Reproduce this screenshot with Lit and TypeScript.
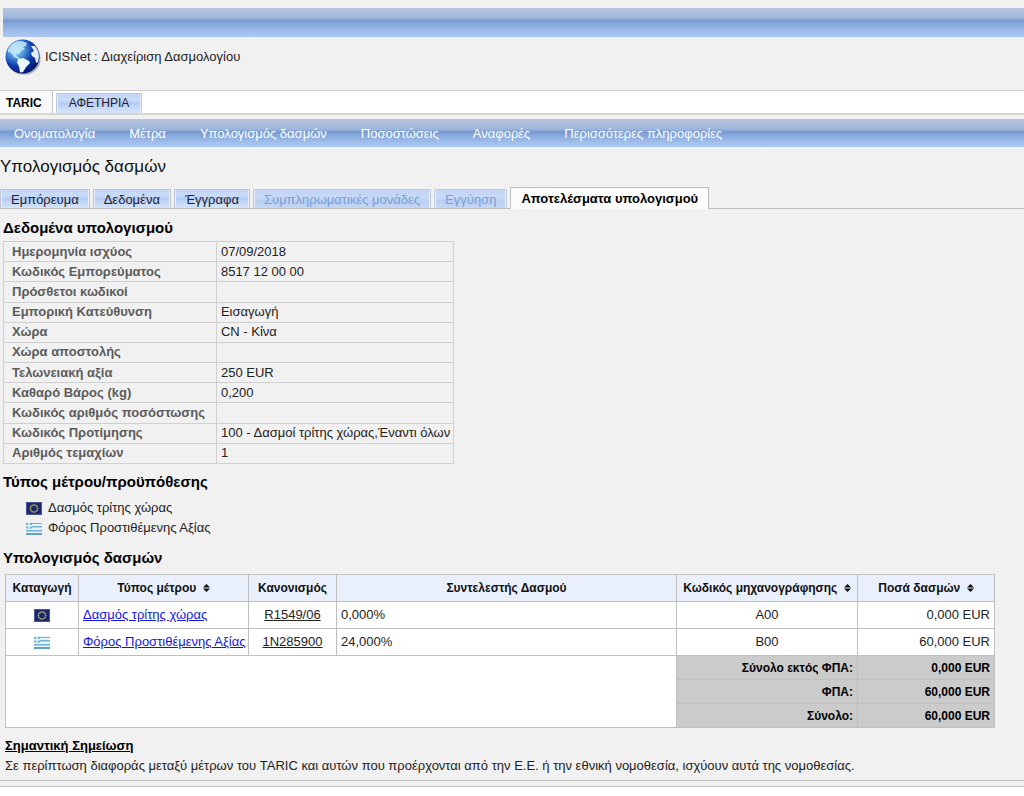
import { LitElement, html, css, svg, nothing } from "lit";
import { customElement, property } from "lit/decorators.js";
import { classMap } from "lit/directives/class-map.js";

const euStars = Array.from({ length: 12 }, (_, i) => {
  const a = (i * Math.PI) / 6;
  return svg`<circle cx=${8 + 3.6 * Math.sin(a)} cy=${6.5 - 3.6 * Math.cos(a)} r="0.9" fill="#a8a552"/>`;
});

@customElement("country-flag")
export class CountryFlag extends LitElement {
  @property() code = "eu";

  static styles = css`
    :host { display: inline-block; width: 16px; height: 13px; }
    .flag { display: block; width: 16px; height: 13px; }
  `;

  render() {
    if (this.code === "eu") {
      return html`<svg class="flag" viewBox="0 0 16 13" role="img" aria-label="EU">
        <rect width="16" height="13" fill="#4a5796"/>
        <rect x="1" y="1" width="14" height="11" fill="#1d2672"/>
        ${euStars}
      </svg>`;
    }
    return html`<svg class="flag" viewBox="0 0 16 13" role="img" aria-label="GR">
      <rect width="16" height="13" fill="#e6f1f6"/>
      <rect x="0" y="1" width="16" height="1" fill="#75b3d2"/>
      <rect x="6" y="4" width="10" height="1.5" fill="#75b3d2"/>
      <rect x="0" y="1" width="6" height="5.5" fill="#75b3d2"/>
      <rect x="2.4" y="1" width="1.2" height="5.5" fill="#fff"/>
      <rect x="0" y="3.2" width="6" height="1.2" fill="#fff"/>
      <rect x="0" y="8" width="16" height="1.5" fill="#75b3d2"/>
      <rect x="0" y="11" width="16" height="2" fill="#65a3c4"/>
    </svg>`;
  }
}

const menu = ["Ονοματολογία", "Μέτρα", "Υπολογισμός δασμών", "Ποσοστώσεις", "Αναφορές", "Περισσότερες πληροφορίες"];

const steps = [
  { label: "Εμπόρευμα" },
  { label: "Δεδομένα" },
  { label: "Έγγραφα" },
  { label: "Συμπληρωματικές μονάδες", disabled: true },
  { label: "Εγγύηση", disabled: true },
  { label: "Αποτελέσματα υπολογισμού", active: true },
];

const inputs: [string, string][] = [
  ["Ημερομηνία ισχύος", "07/09/2018"],
  ["Κωδικός Εμπορεύματος", "8517 12 00 00"],
  ["Πρόσθετοι κωδικοί", ""],
  ["Εμπορική Κατεύθυνση", "Εισαγωγή"],
  ["Χώρα", "CN - Κίνα"],
  ["Χώρα αποστολής", ""],
  ["Τελωνειακή αξία", "250 EUR"],
  ["Καθαρό Βάρος (kg)", "0,200"],
  ["Κωδικός αριθμός ποσόστωσης", ""],
  ["Κωδικός Προτίμησης", "100 - Δασμοί τρίτης χώρας,Έναντι όλων"],
  ["Αριθμός τεμαχίων", "1"],
];

const measures = [
  { flag: "eu", type: "Δασμός τρίτης χώρας", reg: "R1549/06", rate: "0,000%", code: "A00", amount: "0,000 EUR" },
  { flag: "gr", type: "Φόρος Προστιθέμενης Αξίας", reg: "1N285900", rate: "24,000%", code: "B00", amount: "60,000 EUR" },
];

const totals = [
  ["Σύνολο εκτός ΦΠΑ:", "0,000 EUR"],
  ["ΦΠΑ:", "60,000 EUR"],
  ["Σύνολο:", "60,000 EUR"],
];

const columns = [
  { label: "Καταγωγή", cls: "c-origin" },
  { label: "Τύπος μέτρου", cls: "c-type", sort: true },
  { label: "Κανονισμός", cls: "c-reg" },
  { label: "Συντελεστής Δασμού", cls: "c-rate" },
  { label: "Κωδικός μηχανογράφησης", cls: "c-code", sort: true },
  { label: "Ποσά δασμών", cls: "c-amount", sort: true },
];

@customElement("app-root")
export class AppRoot extends LitElement {
  static styles = css`
    :host {
      display: block;
      overflow-x: hidden;
      min-height: 100vh;
      background: #fff;
      color: #222;
      font: 13px/20px "Liberation Sans", Arial, sans-serif;
    }
    * { box-sizing: border-box; }
    .page { background: #f1f1f1; padding-top: 8px; border-bottom: 1px solid #c4c4c4; }
    .blue { background: linear-gradient(#b7c5dc 0, #9db6de 34%, #7899cf 44%, #86a8dc 56%, #a3c0ec 84%, #abc7f0); }
    .banner { height: 29px; margin-left: 3px; }
    .brand { display: flex; align-items: center; gap: 4px; height: 53px; padding: 0 5px 13px 5px; }
    .globe { width: 36px; height: 36px; flex: none; }
    button { font: inherit; color: inherit; margin: 0; border: 0; cursor: pointer; }
    .modules { display: flex; align-items: flex-end; gap: 3px; height: 25px; background: #fff; border-top: 1px solid #cdcdcd; border-bottom: 2px solid #d6d6d6; }
    .module-on { align-self: stretch; font-weight: bold; font-size: 12px; color: #000; padding: 1px 10px 0 6px; background: #f8f8f8; border-right: 1px solid #c4c4c4; }
    .module { height: 20px; line-height: 19px; padding: 0 12px; font-size: 12px; }
    .raised { background: linear-gradient(#c3d6f6, #c9dbf8 30%, #b4cbf0 50%, #c6d9f7 70%, #d5e3fa); border: 1px solid #bcc5d4; border-bottom: 0; box-shadow: inset 1px 0 #e8effb, inset -1px 0 #e8effb; color: #223; }
    .menu { display: flex; gap: 34px; height: 28px; margin-top: 4px; padding: 0 14px; align-items: center; border-top: 1px solid #c2c2c2; }
    .menu a { color: #fff; text-decoration: none; white-space: nowrap; }
    h1 { margin: 8px 0 0; font-size: 17px; line-height: 24px; font-weight: normal; color: #111; }
    .steps { display: flex; align-items: flex-end; gap: 3px; height: 23px; margin-top: 7px; border-bottom: 1px solid #bdbdbd; }
    .step { height: 19px; line-height: 19px; padding: 0 10px; white-space: nowrap; }
    .step:disabled { color: #7c9fd4; background: linear-gradient(#c0d3f3, #c9daf7 40%, #b9cff3 60%, #c4d7f6); border-color: #c0cbdf; cursor: default; }
    .step-on { height: 22px; margin-bottom: -1px; line-height: 21px; padding: 0 10px; background: #fcfcfc; border: 1px solid #bdbdbd; border-bottom: 0; font-weight: bold; color: #000; white-space: nowrap; }
    h2 { margin: 0; padding-left: 3px; font-size: 15px; line-height: 20px; font-weight: bold; color: #000; }
    .h-data { margin-top: 9px; }
    .h-types { margin-top: 8px; }
    .h-calc { margin-top: 10px; }
    table { border-collapse: collapse; }
    .data { margin: 3px 0 0 3px; height: 223px; }
    .data th, .data td { border: 1px solid #d0d0d0; padding: 0 3px 0 4px; line-height: 18px; text-align: left; white-space: nowrap; }
    .data td { white-space: pre; }
    .data th { color: #5c5c5c; padding: 0 11px 0 8px; }
    .legend { list-style: none; margin: 6px 0 0; padding: 0 0 0 26px; }
    .legend li { display: flex; align-items: center; gap: 6px; height: 20px; }
    .calc { width: calc(100% - 34px); margin: 6px 0 0 5px; table-layout: fixed; background: #fff; }
    .calc th, .calc td { border: 1px solid #bfbfbf; padding: 0 4px; white-space: nowrap; }
    .calc thead th { height: 27px; background: #e9f0fb; font-size: 12px; color: #111; }
    .calc tbody td { height: 27px; }
    .calc tfoot th, .calc tfoot td { height: 24px; background: #cbcbcb; border-color: #bfbfbf; text-align: right; font-weight: bold; font-size: 12px; color: #000; }
    .calc tfoot td.blank { background: #fff; }
    .c-origin { width: 73px; }
    .c-type { width: 170px; }
    .c-reg { width: 88px; }
    .c-code { width: 181px; }
    .c-amount { width: 137px; }
    .mid { text-align: center; }
    .end { text-align: right; }
    .calc country-flag { display: block; margin: 0 auto; }
    .calc a { color: #1414e6; }
    .calc a.dark { color: #222; }
    .sort { background: none; padding: 0; }
    .sort svg { width: 7px; height: 8px; margin-left: 3px; }
    .note { margin: 8px 0 0; padding-bottom: 4px; padding-left: 5px; border-bottom: 1px solid #c4c4c4; }
    .note strong { display: block; color: #000; text-decoration: underline; }
    .note p { margin: 0; }
    .rule { height: 5px; }
  `;

  private header(c: { label: string; sort?: boolean }) {
    return c.sort
      ? html`<button class="sort">${c.label} <svg viewBox="0 0 7 8" aria-hidden="true"><path d="M3.5 0 7 3.500H0ZM3.500 8 0 4.500h7Z" fill="#111"/></svg></button>`
      : c.label;
  }

  render() {
    return html`
      <div class="page">
        <div class="banner blue"></div>
        <header class="brand">
          <svg class="globe" viewBox="0 0 36 36" aria-hidden="true">
            <defs>
              <radialGradient id="sea" cx="0.32" cy="0.3" r="0.78">
                <stop offset="0" stop-color="#b9e4fb"/><stop offset="0.3" stop-color="#4d96dc"/>
                <stop offset="0.6" stop-color="#123fae"/><stop offset="1" stop-color="#020f68"/>
              </radialGradient>
            </defs>
            <ellipse cx="19" cy="20" rx="16.5" ry="15.8" fill="#aaaab4"/>
            <circle cx="17.5" cy="17.5" r="17" fill="url(#sea)"/>
            <path d="M3 11C5 6 9 3 13 2l5 .5 4 1.5-1 3-3 1 2 2-4 2-2 3-3-.5 1 3 3 1.500-1 1.500-5-2.500-3-4-3-1Z" fill="#c4e8fa" opacity=".85"/>
            <path d="M13 20l5-1 6 3 1 2-4 4-3 5-3 .5-1-6-2-4Z" fill="#eef7fd"/>
            <path d="M26 7l4 0 3 5 1 5-1 6-2 1-1-5-3-2-1-3 3-2Z" fill="#e2effb"/>
          </svg>
          <span>ICISNet : Διαχείριση Δασμολογίου</span>
        </header>
        <div class="modules">
          <button class="module-on">TARIC</button>
          <button class="module raised">ΑΦΕΤΗΡΙΑ</button>
        </div>
        <nav class="menu blue">${menu.map((m) => html`<a href="#">${m}</a>`)}</nav>

        <main>
          <h1>Υπολογισμός δασμών</h1>
          <div class="steps" role="tablist">
            ${steps.map((s) => html`<button role="tab" aria-selected=${s.active ? "true" : "false"} ?disabled=${s.disabled}
              class=${classMap({ "step-on": !!s.active, step: !s.active, raised: !s.active })}>${s.label}</button>`)}
          </div>

          <h2 class="h-data">Δεδομένα υπολογισμού</h2>
          <table class="data">
            <tbody>${inputs.map(([k, v]) => html`<tr><th scope="row">${k}</th><td>${v || nothing}</td></tr>`)}</tbody>
          </table>

          <h2 class="h-types">Τύπος μέτρου/προϋπόθεσης</h2>
          <ul class="legend">
            ${measures.map((m) => html`<li><country-flag code=${m.flag}></country-flag>${m.type}</li>`)}
          </ul>

          <h2 class="h-calc">Υπολογισμός δασμών</h2>
          <table class="calc">
            <thead><tr>${columns.map((c) => html`<th scope="col" class=${c.cls}>${this.header(c)}</th>`)}</tr></thead>
            <tbody>
              ${measures.map((m) => html`<tr>
                <td><country-flag code=${m.flag}></country-flag></td>
                <td><a href="#">${m.type}</a></td>
                <td class="mid"><a class="dark" href="#">${m.reg}</a></td>
                <td>${m.rate}</td>
                <td class="mid">${m.code}</td>
                <td class="end">${m.amount}</td>
              </tr>`)}
            </tbody>
            <tfoot>
              ${totals.map(([k, v], i) => html`<tr>
                ${i === 0 ? html`<td class="blank" colspan="4" rowspan="3"></td>` : nothing}
                <th scope="row">${k}</th><td>${v}</td>
              </tr>`)}
            </tfoot>
          </table>

          <div class="note">
            <strong>Σημαντική Σημείωση</strong>
            <p>Σε περίπτωση διαφοράς μεταξύ μέτρων του TARIC και αυτών που προέρχονται από την Ε.Ε. ή την εθνική νομοθεσία, ισχύουν αυτά της νομοθεσίας.</p>
          </div>
          <div class="rule"></div>
        </main>
      </div>
    `;
  }
}
